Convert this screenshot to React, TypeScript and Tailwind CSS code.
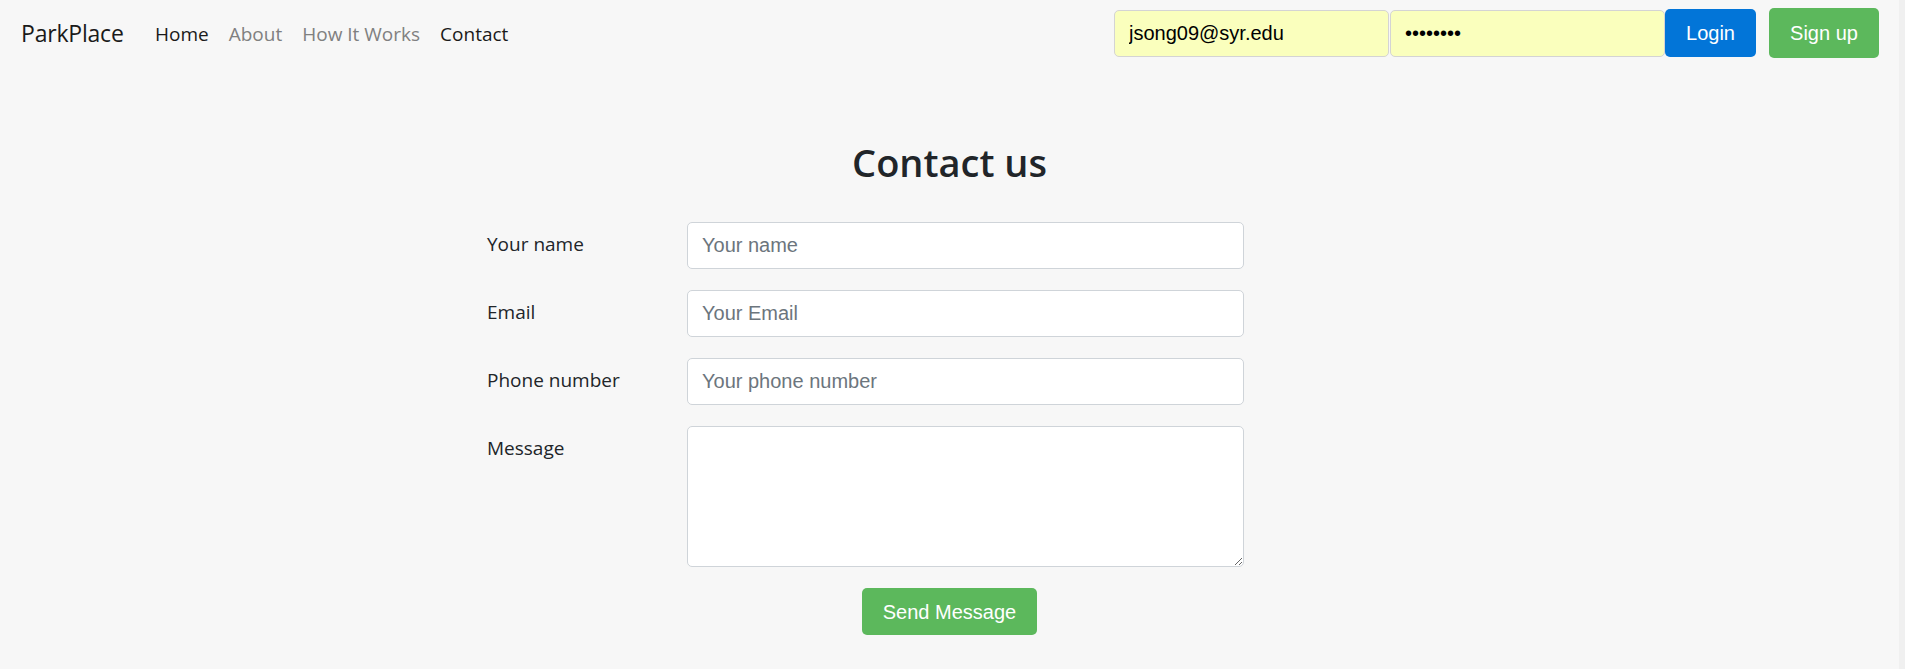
import React from 'react';

const sans = "font-['Segoe_UI','Open_Sans','Noto_Sans',sans-serif]";
const arial = "font-['Liberation_Sans',Arial,sans-serif]";

const fields = [
  { label: 'Your name', placeholder: 'Your name', type: 'text' },
  { label: 'Email', placeholder: 'Your Email', type: 'email' },
  { label: 'Phone number', placeholder: 'Your phone number', type: 'tel' },
];

export default function App() {
  return (
    <div className="min-h-screen flex bg-[#f7f7f7]">
      <div className="flex-1">
        {/* navbar */}
        <nav className={`h-[66px] flex items-center justify-between pl-[21px] pr-[20px] ${sans}`}>
          <div className="flex items-center">
            <a className="w-[124px] text-[23px] leading-[38px] tracking-[-0.2px] text-[#1a1a1a]">ParkPlace</a>
            <ul className="flex items-center text-[19px] leading-[30px] pt-[2px]">
              <li className="px-[10px] text-[#1a1a1a]">Home</li>
              <li className="px-[10px] text-[#808080]">About</li>
              <li className="px-[10px] text-[#808080]">How It Works</li>
              <li className="px-[10px] text-[#1a1a1a]">Contact</li>
            </ul>
          </div>
          <div className={`flex items-center ${arial}`}>
            <input
              readOnly
              value="jsong09@syr.edu"
              className="w-[275px] h-[47px] px-[14px] text-[20px] text-black bg-[#faffbd] border border-[#d4d4d4] rounded-[5px] outline-none"
            />
            <input
              readOnly
              type="password"
              value="password"
              className="ml-px w-[275px] h-[47px] px-[14px] text-[20px] text-black bg-[#faffbd] border border-[#d4d4d4] rounded-[5px] outline-none"
            />
            <button className="w-[91px] h-[48px] text-[20px] text-white bg-[#0275d8] rounded-[5px]">
              Login
            </button>
            <button className="ml-[13px] w-[110px] h-[50px] text-[20px] text-white bg-[#5cb85c] rounded-[5px]">
              Sign up
            </button>
          </div>
        </nav>

        {/* contact form */}
        <section className="mx-auto w-[925px] pt-[72px]">
          <h2 className={`text-center text-[38px] leading-[48px] font-semibold text-[#212529] ${sans}`}>
            Contact us
          </h2>
          <form className="mt-[36px] flex flex-col gap-[21px]">
            {fields.map((f) => (
              <div key={f.label} className="flex">
                <label className={`w-[200px] pt-[7px] text-[19px] leading-[30px] text-[#212529] ${sans}`}>
                  {f.label}
                </label>
                <input
                  type={f.type}
                  placeholder={f.placeholder}
                  className={`w-[557px] h-[47px] px-[14px] text-[20px] bg-white border border-[#cfd4d9] rounded-[5px] outline-none placeholder:text-[#6c757d] ${arial}`}
                />
              </div>
            ))}
            <div className="flex">
              <label className={`w-[200px] pt-[7px] text-[19px] leading-[30px] text-[#212529] ${sans}`}>
                Message
              </label>
              <textarea className="w-[557px] h-[141px] bg-white border border-[#cfd4d9] rounded-[5px] outline-none" />
            </div>
            <div className="flex justify-center">
              <button
                type="button"
                className={`w-[175px] h-[47px] text-[20px] text-white bg-[#5cb85c] rounded-[5px] ${arial}`}
              >
                Send Message
              </button>
            </div>
          </form>
        </section>
      </div>
      <div className="w-[6px] bg-[#f0f0f0]" />
    </div>
  );
}
